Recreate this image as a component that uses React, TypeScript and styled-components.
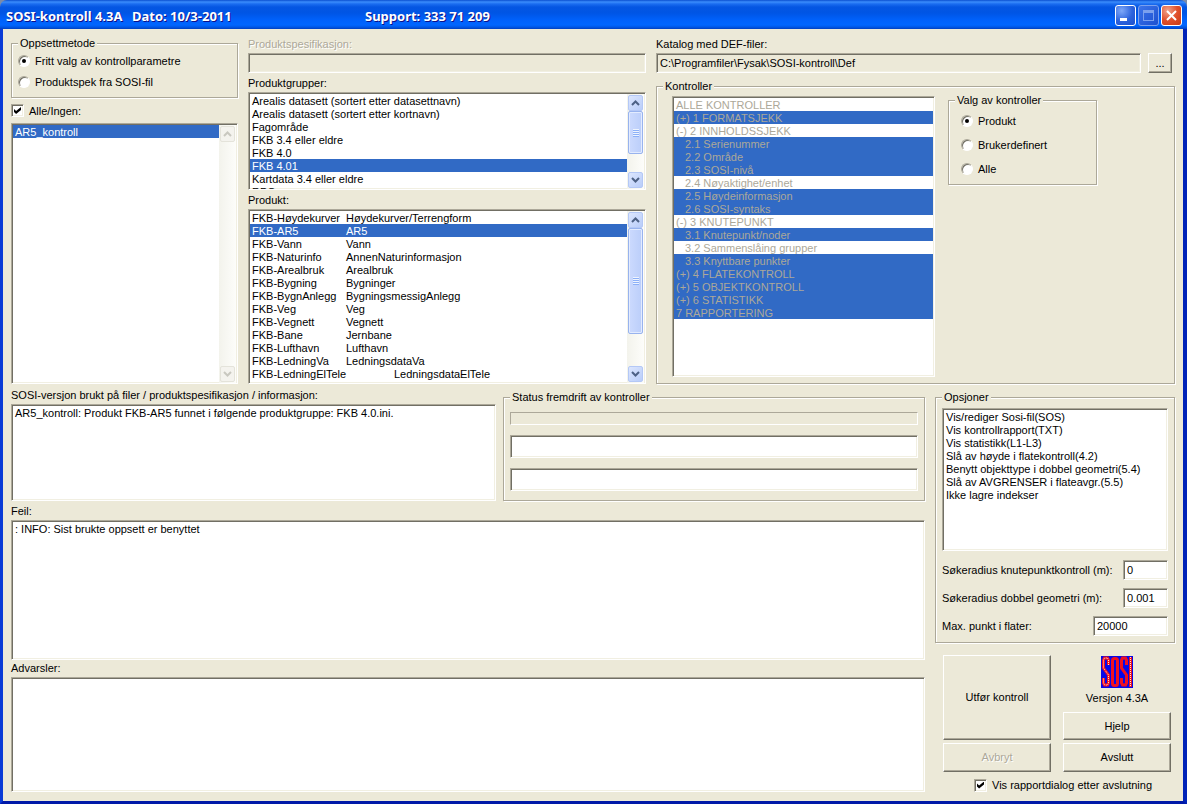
import React, { useState } from "react";
import styled, { createGlobalStyle, css } from "styled-components";

const face = "#ece9d8";
const shade = "#aca899";
const dark = "#716f64";
const select = "#316ac5";

const GlobalStyle = createGlobalStyle`
  *, *::before, *::after { box-sizing: border-box; }
  body {
    margin: 0;
    background: #7c8ba8;
    font: 11px/13px "Liberation Sans", Arial, sans-serif;
    color: #000;
  }
  button, input { font: inherit; color: inherit; }
`;

const sunken = css`
  border: 1px solid;
  border-color: ${shade} #fff #fff ${shade};
  box-shadow: inset 1px 1px 0 ${dark}, inset -1px -1px 0 #f1efe2;
`;

const Window = styled.div`
  display: flex;
  flex-direction: column;
  min-height: 100vh;
  border-radius: 7px 7px 0 0;
  overflow: hidden;
`;

const TitleBar = styled.header`
  display: flex;
  align-items: center;
  height: 29px;
  padding: 2px 5px 0 6px;
  background: linear-gradient(
    #0a4fd0 0, #3b8dfc 2px, #1a6cf0 4px, #0556e2 7px, #0055e5 13px,
    #0061fb 20px, #0066ff 25px, #0058e8 27px, #003fc0 29px
  );
  color: #fff;
  font: bold 13px/16px "Noto Sans", sans-serif;
  text-shadow: 1px 1px 0 #0f1089;
`;

const TitleText = styled.span<{ $width: number }>`
  min-width: ${(p) => p.$width}px;
  white-space: nowrap;
`;

const TitleButtons = styled.div`
  display: flex;
  gap: 2px;
  margin-left: auto;
`;

const TitleButton = styled.button<{ $tone: "blue" | "dim" | "red" }>`
  width: 21px;
  height: 21px;
  padding: 0;
  border: 1px solid ${(p) => (p.$tone === "dim" ? "#7ba0ee" : "#fff")};
  border-radius: 3px;
  background: ${(p) =>
    p.$tone === "red"
      ? "radial-gradient(circle at 30% 25%, #f0a48c, #e0502c 50%, #c83a14)"
      : p.$tone === "dim"
        ? "linear-gradient(135deg, #3c74ea, #1c50d0)"
        : "radial-gradient(circle at 30% 25%, #7fa8f8, #2c62dc 55%, #1c50cc)"};
  svg { display: block; }
`;

const Client = styled.main`
  flex: 1;
  display: flex;
  flex-direction: column;
  gap: 3px;
  padding: 7px 8px 9px;
  border: solid;
  border-width: 0 4px 3px 3px;
  border-color: #0019a8 #0023b8 #0019a8 #0a3bd6;
  background: ${face};
`;

const TopArea = styled.div`
  display: grid;
  grid-template-columns: minmax(0, 227fr) minmax(0, 398fr) minmax(0, 519fr);
  gap: 10px;
`;

const BottomArea = styled.div`
  flex: 1;
  display: grid;
  grid-template-columns: minmax(0, 1fr) 240px;
  gap: 10px;
`;

const Column = styled.div<{ $gap?: number }>`
  display: flex;
  flex-direction: column;
  gap: ${(p) => p.$gap ?? 0}px;
  min-width: 0;
`;

const Field = styled.div<{ $grow?: number }>`
  display: flex;
  flex-direction: column;
  flex: ${(p) => (p.$grow ? `${p.$grow} 1 0` : "none")};
  min-width: 0;
`;

const Caption = styled.label<{ $disabled?: boolean }>`
  margin-bottom: 1px;
  line-height: 16px;
  white-space: nowrap;
  ${(p) => p.$disabled && `color: ${shade}; text-shadow: 1px 1px 0 #fff;`}
`;

const TextBox = styled.input<{ $width?: number; $height?: number; $flat?: boolean }>`
  ${sunken}
  width: ${(p) => (p.$width ? `${p.$width}px` : "100%")};
  height: ${(p) => p.$height ?? 20}px;
  min-width: 0;
  padding: 0 3px;
  border-radius: 0;
  outline: none;
  background: ${(p) => (p.$flat ? face : "#fff")};
`;

const Progress = styled.div`
  height: 13px;
  border: 1px solid;
  border-color: ${shade} #fff #fff ${shade};
`;

const Group = styled.fieldset<{ $top?: number; $width?: number; $grow?: boolean }>`
  min-width: 0;
  margin: ${(p) => p.$top ?? 0}px 0 0;
  padding: 0;
  border: 1px solid ${shade};
  box-shadow: 1px 1px 0 #fff, inset 1px 1px 0 #fff;
  ${(p) => p.$width && `width: ${p.$width}px;`}
  ${(p) => p.$grow && "flex: 1;"}
`;

const Legend = styled.legend`
  margin-left: 6px;
  padding: 0 2px;
  background: ${face};
  line-height: 14px;
`;

const GroupBody = styled.div<{ $pad: string; $gap?: number; $row?: boolean }>`
  display: flex;
  flex-direction: ${(p) => (p.$row ? "row" : "column")};
  align-items: ${(p) => (p.$row ? "flex-start" : "stretch")};
  gap: ${(p) => p.$gap ?? 0}px;
  padding: ${(p) => p.$pad};
`;

const ListFrame = styled.div<{ $height?: number; $width?: number; $top?: number }>`
  ${sunken}
  display: flex;
  flex: ${(p) => (p.$height ? "none" : "1 1 0")};
  ${(p) => p.$height && `height: ${p.$height}px;`}
  ${(p) => p.$width && `flex: 0 1 ${p.$width}px;`}
  margin-top: ${(p) => p.$top ?? 0}px;
  padding: 1px 1px 0;
  min-width: 0;
  overflow: hidden;
  background: #fff;
`;

const List = styled.ul`
  flex: 1;
  min-width: 0;
  margin: 0;
  padding: 0;
  list-style: none;
  overflow: hidden;
`;

const Item = styled.li<{ $selected?: boolean; $muted?: boolean; $indent?: boolean }>`
  display: flex;
  height: 13px;
  line-height: 15px;
  padding-left: ${(p) => (p.$indent ? 11 : 2)}px;
  white-space: pre;
  background: ${(p) => (p.$selected ? select : "transparent")};
  color: ${(p) => (p.$muted ? shade : p.$selected ? "#fff" : "#000")};
`;

const Code = styled.span<{ $wide?: boolean }>`
  width: ${(p) => (p.$wide ? 142 : 94)}px;
`;

const ScrollTrack = styled.div`
  display: flex;
  flex-direction: column;
  width: 17px;
  padding: 1px;
  background: linear-gradient(90deg, #f3f3ec, #fdfdfa);
`;

const ScrollButton = styled.button`
  flex: none;
  height: 16px;
  padding: 0;
  border: 1px solid #b4c8f6;
  border-radius: 2px;
  background: linear-gradient(135deg, #dce6fe, #b9cdf9);
  color: #4d6185;
  svg { display: block; margin: auto; }
  &:disabled {
    border-color: #e4e3da;
    background: #f4f3ee;
    color: #c9c8c0;
  }
`;

const ScrollThumb = styled.div<{ $height: number }>`
  display: flex;
  align-items: center;
  justify-content: center;
  flex: 0 1 ${(p) => p.$height}px;
  border: 1px solid #98b3ee;
  border-radius: 2px;
  box-shadow: inset 0 0 0 1px #e2ebff;
  background: linear-gradient(90deg, #ccdafe, #bbcefa);
  &::before {
    content: "";
    width: 6px;
    height: 8px;
    background: repeating-linear-gradient(#eef4fe 0 1px, #8cb0f8 1px 2px);
  }
`;

const ScrollGap = styled.div`
  flex: 1;
`;

const Choice = styled.label`
  display: flex;
  align-items: center;
  gap: 5px;
  line-height: 14px;
  white-space: nowrap;
`;

const Radio = styled.input.attrs({ type: "radio" })`
  appearance: none;
  display: grid;
  place-items: center;
  width: 12px;
  height: 12px;
  margin: 0;
  border: 1px solid;
  border-color: ${shade} #fff #fff ${shade};
  border-radius: 50%;
  box-shadow: inset 1px 1px 0 ${dark};
  background: #fff;
  &:checked::before {
    content: "";
    width: 4px;
    height: 4px;
    border-radius: 50%;
    background: #000;
  }
`;

const Check = styled.input.attrs({ type: "checkbox" })`
  ${sunken}
  appearance: none;
  display: grid;
  place-items: center;
  width: 13px;
  height: 13px;
  margin: 0;
  background: #fff;
  &:checked::before {
    content: "";
    width: 7px;
    height: 7px;
    background: #000;
    clip-path: polygon(0 28%, 0 70%, 30% 100%, 100% 42%, 100% 0, 30% 58%);
  }
`;

const AllRow = styled.div`
  display: flex;
  align-items: center;
  height: 25px;
`;

const PathRow = styled.div`
  display: flex;
  gap: 7px;
  padding-right: 3px;
  margin-bottom: 6px;
`;

const NumberRow = styled.div`
  display: flex;
  align-items: center;
  justify-content: space-between;
  white-space: nowrap;
`;

const NumberRows = styled.div`
  display: flex;
  flex-direction: column;
  gap: 8px;
  margin-top: 9px;
`;

const MessageRow = styled.div`
  display: grid;
  grid-template-columns: minmax(0, 485fr) minmax(0, 422fr);
  gap: 7px;
  margin-bottom: 2px;
`;

const PushButton = styled.button<{ $height: number; $width?: number }>`
  flex: none;
  width: ${(p) => (p.$width ? `${p.$width}px` : "100%")};
  height: ${(p) => p.$height}px;
  padding: 0;
  border: 1px solid;
  border-color: #fff ${dark} ${dark} #fff;
  border-radius: 0;
  box-shadow: inset -1px -1px 0 ${shade};
  background: ${face};
  &:disabled {
    color: ${shade};
    text-shadow: 1px 1px 0 #fff;
  }
`;

const Actions = styled.div`
  display: grid;
  grid-template-columns: 1fr 1fr;
  gap: 12px;
  margin: 12px 4px 0 8px;
`;

const Brand = styled.div`
  display: flex;
  flex-direction: column;
  align-items: center;
  gap: 4px;
  height: 54px;
  padding-top: 1px;
`;

const ReportRow = styled.div`
  margin: 6px 0 0 39px;
`;

const Chevron = ({ down = false }: { down?: boolean }) => (
  <svg width="9" height="8" viewBox="0 0 9 8" fill="none" stroke="currentColor" strokeWidth="2">
    <path d={down ? "M1 2l3.500 3.500L8 2" : "M1 6l3.500-3.500L8 6"} />
  </svg>
);

function ScrollBar({ thumb }: { thumb?: number }) {
  return (
    <ScrollTrack>
      <ScrollButton aria-label="Rull opp" disabled={!thumb}><Chevron /></ScrollButton>
      {thumb && <ScrollThumb $height={thumb} />}
      <ScrollGap />
      <ScrollButton aria-label="Rull ned" disabled={!thumb}><Chevron down /></ScrollButton>
    </ScrollTrack>
  );
}

interface ListBoxProps {
  label: string;
  items: string[];
  selected?: number;
  height?: number;
  scroll?: boolean;
  thumb?: number;
}

function ListBox({ label, items, selected, height, scroll, thumb }: ListBoxProps) {
  const [current, setCurrent] = useState(selected);
  return (
    <ListFrame $height={height}>
      <List role="listbox" aria-label={label}>
        {items.map((text, i) => {
          const [code, name] = text.split("\t");
          return (
            <Item key={text} role="option" aria-selected={i === current} $selected={i === current} onClick={() => setCurrent(i)}>
              {name ? <><Code $wide={code.length > 16}>{code}</Code>{name}</> : text}
            </Item>
          );
        })}
      </List>
      {scroll && <ScrollBar thumb={thumb} />}
    </ListFrame>
  );
}

function Options({ name, options }: { name: string; options: string[] }) {
  return (
    <>
      {options.map((option, i) => (
        <Choice key={option}><Radio name={name} defaultChecked={i === 0} />{option}</Choice>
      ))}
    </>
  );
}

const groups = [
  "Arealis datasett (sortert etter datasettnavn)", "Arealis datasett (sortert etter kortnavn)", "Fagområde",
  "FKB 3.4 eller eldre", "FKB 4.0", "FKB 4.01", "Kartdata 3.4 eller eldre", "RPG",
];

const products = [
  "FKB-Høydekurver\tHøydekurver/Terrengform", "FKB-AR5\tAR5", "FKB-Vann\tVann", "FKB-Naturinfo\tAnnenNaturinformasjon",
  "FKB-Arealbruk\tArealbruk", "FKB-Bygning\tBygninger", "FKB-BygnAnlegg\tBygningsmessigAnlegg", "FKB-Veg\tVeg",
  "FKB-Vegnett\tVegnett", "FKB-Bane\tJernbane", "FKB-Lufthavn\tLufthavn", "FKB-LedningVa\tLedningsdataVa",
  "FKB-LedningElTele\tLedningsdataElTele", "FKB-Bygnpunkt\tBygningspunkt",
];

const controls: { text: string; on?: boolean }[] = [
  { text: "ALLE KONTROLLER" },
  { text: "(+) 1 FORMATSJEKK", on: true },
  { text: "(-) 2 INNHOLDSSJEKK" },
  { text: "2.1 Serienummer", on: true },
  { text: "2.2 Område", on: true },
  { text: "2.3 SOSI-nivå", on: true },
  { text: "2.4 Nøyaktighet/enhet" },
  { text: "2.5 Høydeinformasjon", on: true },
  { text: "2.6 SOSI-syntaks", on: true },
  { text: "(-) 3 KNUTEPUNKT" },
  { text: "3.1 Knutepunkt/noder", on: true },
  { text: "3.2 Sammenslåing grupper" },
  { text: "3.3 Knyttbare punkter", on: true },
  { text: "(+) 4 FLATEKONTROLL", on: true },
  { text: "(+) 5 OBJEKTKONTROLL", on: true },
  { text: "(+) 6 STATISTIKK", on: true },
  { text: "7 RAPPORTERING", on: true },
];

const settings = [
  "Vis/rediger Sosi-fil(SOS)", "Vis kontrollrapport(TXT)", "Vis statistikk(L1-L3)", "Slå av høyde i flatekontroll(4.2)",
  "Benytt objekttype i dobbel geometri(5.4)", "Slå av AVGRENSER i flateavgr.(5.5)", "Ikke lagre indekser",
];

const numbers = [
  { id: "node", label: "Søkeradius knutepunktkontroll (m):", value: "0", width: 45 },
  { id: "double", label: "Søkeradius dobbel geometri (m):", value: "0.001", width: 45 },
  { id: "max", label: "Max. punkt i flater:", value: "20000", width: 75 },
];

const bend = (x: number) =>
  `${x + 5},9 ${x + 5},4 ${x + 4},2 ${x + 1},2 ${x},4 ${x},12 ${x + 5},19 ${x + 5},27 ${x + 4},29 ${x + 1},29 ${x},27 ${x},22`;

const SosiLogo = () => (
  <svg width="32" height="32" viewBox="0 0 32 32" fill="none" role="img" aria-label="SOSI">
    <rect width="32" height="32" fill="#0808e8" />
    <g stroke="#f01020" strokeWidth="3">
      <polyline points={bend(2.5)} />
      <rect x="11.500" y="2.500" width="5" height="27" rx="2" />
      <polyline points={bend(20.5)} />
      <line x1="29.500" y1="1" x2="29.500" y2="31" />
    </g>
    <g stroke="#fff0c8" strokeDasharray="1 1">
      <polyline points={bend(2.5)} />
      <line x1="29.500" y1="1" x2="29.500" y2="31" />
    </g>
  </svg>
);

export default function App() {
  return (
    <>
      <GlobalStyle />
      <Window>
        <TitleBar>
          <TitleText $width={126}>SOSI-kontroll 4.3A</TitleText>
          <TitleText $width={233}>Dato: 10/3-2011</TitleText>
          <TitleText $width={130}>Support: 333 71 209</TitleText>
          <TitleButtons>
            <TitleButton $tone="blue" aria-label="Minimer">
              <svg width="19" height="19"><rect x="4" y="12" width="7" height="3" fill="#fff" /></svg>
            </TitleButton>
            <TitleButton $tone="dim" aria-label="Maksimer" disabled>
              <svg width="19" height="19" fill="none" stroke="#7ba0ee">
                <rect x="4.500" y="4.500" width="10" height="10" />
                <line x1="4" y1="6" x2="15" y2="6" strokeWidth="2" />
              </svg>
            </TitleButton>
            <TitleButton $tone="red" aria-label="Lukk">
              <svg width="19" height="19" stroke="#fff" strokeWidth="2"><path d="M5 5l9 9M14 5l-9 9" /></svg>
            </TitleButton>
          </TitleButtons>
        </TitleBar>

        <Client>
          <TopArea>
            <Column>
              <Group>
                <Legend>Oppsettmetode</Legend>
                <GroupBody $pad="4px 6px 8px" $gap={7}>
                  <Options name="method" options={["Fritt valg av kontrollparametre", "Produktspek fra SOSI-fil"]} />
                </GroupBody>
              </Group>
              <AllRow>
                <Choice><Check defaultChecked />Alle/Ingen:</Choice>
              </AllRow>
              <ListBox label="Filer" items={["AR5_kontroll"]} selected={0} scroll />
            </Column>

            <Column $gap={2}>
              <Field>
                <Caption htmlFor="spec" $disabled>Produktspesifikasjon:</Caption>
                <TextBox id="spec" $flat disabled />
              </Field>
              <Field>
                <Caption as="span">Produktgrupper:</Caption>
                <ListBox label="Produktgrupper" items={groups} selected={5} height={98} scroll thumb={43} />
              </Field>
              <Field>
                <Caption as="span">Produkt:</Caption>
                <ListBox label="Produkt" items={products} selected={1} height={175} scroll thumb={106} />
              </Field>
            </Column>

            <Column>
              <Caption htmlFor="folder">Katalog med DEF-filer:</Caption>
              <PathRow>
                <TextBox id="folder" $flat readOnly defaultValue="C:\Programfiler\Fysak\SOSI-kontroll\Def" />
                <PushButton $width={24} $height={20}>...</PushButton>
              </PathRow>
              <Group $grow>
                <Legend>Kontroller</Legend>
                <GroupBody $row $pad="0 15px" $gap={13}>
                  <ListFrame $width={263} $height={281} $top={3}>
                    <List role="listbox" aria-label="Kontroller" aria-multiselectable aria-disabled>
                      {controls.map(({ text, on }) => (
                        <Item key={text} role="option" aria-selected={!!on} $selected={on} $muted $indent={/^\d\./.test(text)}>
                          {text}
                        </Item>
                      ))}
                    </List>
                  </ListFrame>
                  <Group $width={149}>
                    <Legend>Valg av kontroller</Legend>
                    <GroupBody $pad="7px 12px 8px" $gap={10}>
                      <Options name="scope" options={["Produkt", "Brukerdefinert", "Alle"]} />
                    </GroupBody>
                  </Group>
                </GroupBody>
              </Group>
            </Column>
          </TopArea>

          <BottomArea>
            <Column>
              <MessageRow>
                <Field>
                  <Caption as="span">SOSI-versjon brukt på filer / produktspesifikasjon / informasjon:</Caption>
                  <ListBox
                    label="Informasjon"
                    items={["AR5_kontroll: Produkt FKB-AR5 funnet i følgende produktgruppe: FKB 4.0.ini."]}
                    height={97}
                  />
                </Field>
                <Group $top={3}>
                  <Legend>Status fremdrift av kontroller</Legend>
                  <GroupBody $pad="8px 6px 9px" $gap={10}>
                    <Progress role="progressbar" aria-label="Fremdrift" />
                    <TextBox $height={23} readOnly aria-label="Status fil" />
                    <TextBox $height={23} readOnly aria-label="Status kontroll" />
                  </GroupBody>
                </Group>
              </MessageRow>
              <Field $grow={156}>
                <Caption as="span">Feil:</Caption>
                <ListBox label="Feil" items={[": INFO: Sist brukte oppsett er benyttet"]} />
              </Field>
              <Field $grow={132}>
                <Caption as="span">Advarsler:</Caption>
                <ListBox label="Advarsler" items={[]} />
              </Field>
            </Column>

            <Column>
              <Group $top={3}>
                <Legend>Opsjoner</Legend>
                <GroupBody $pad="4px 6px 6px">
                  <ListBox label="Opsjoner" items={settings} height={143} />
                  <NumberRows>
                    {numbers.map((n) => (
                      <NumberRow key={n.id}>
                        <label htmlFor={n.id}>{n.label}</label>
                        <TextBox id={n.id} $width={n.width} defaultValue={n.value} />
                      </NumberRow>
                    ))}
                  </NumberRows>
                </GroupBody>
              </Group>
              <Actions>
                <Column $gap={3}>
                  <PushButton $height={85}>Utfør kontroll</PushButton>
                  <PushButton $height={29} disabled>Avbryt</PushButton>
                </Column>
                <Column $gap={3}>
                  <Brand>
                    <SosiLogo />
                    <span>Versjon 4.3A</span>
                  </Brand>
                  <PushButton $height={28}>Hjelp</PushButton>
                  <PushButton $height={29}>Avslutt</PushButton>
                </Column>
              </Actions>
              <ReportRow>
                <Choice><Check defaultChecked />Vis rapportdialog etter avslutning</Choice>
              </ReportRow>
            </Column>
          </BottomArea>
        </Client>
      </Window>
    </>
  );
}
